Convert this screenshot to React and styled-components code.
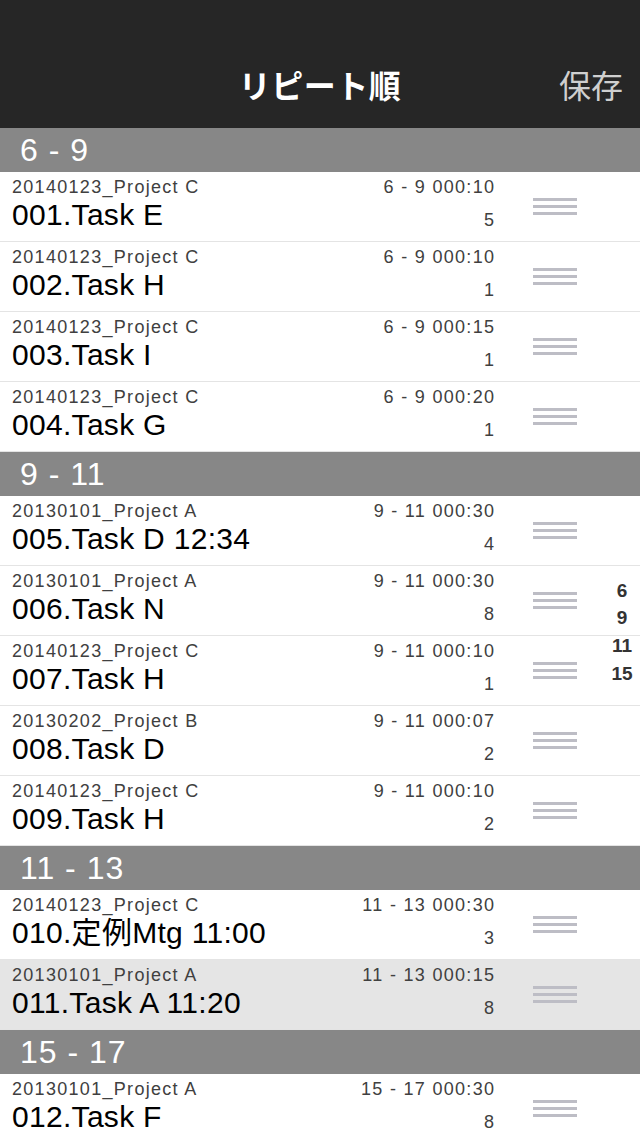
import React from "react";
import styled, { createGlobalStyle } from "styled-components";

const GlobalStyle = createGlobalStyle`
  html, body {
    margin: 0;
    padding: 0;
    background: #ffffff;
  }
  * {
    box-sizing: border-box;
  }
`;

const Screen = styled.div`
  width: 640px;
  height: 1136px;
  overflow: hidden;
  display: flex;
  flex-direction: column;
  background: #ffffff;
  font-family: "Liberation Sans", "Noto Sans CJK JP", sans-serif;
`;

const NavBar = styled.header`
  height: 128px;
  flex-shrink: 0;
  padding-top: 40px;
  background: #262626;
  display: grid;
  grid-template-columns: 1fr auto 1fr;
  align-items: center;
`;

const Title = styled.h1`
  grid-column: 2;
  margin: 0;
  font-family: "Noto Sans CJK JP", sans-serif;
  font-size: 32px;
  font-weight: 700;
  color: #ffffff;
  letter-spacing: 0.5px;
`;

const SaveButton = styled.span`
  justify-self: end;
  padding-right: 17px;
  font-family: "Noto Sans CJK JP", sans-serif;
  font-size: 32px;
  font-weight: 400;
  color: #cfcfcf;
`;

const Body = styled.div`
  position: relative;
  flex: 1;
  overflow: hidden;
`;

const SectionHeader = styled.div`
  height: 44px;
  padding-left: 20px;
  background: #878787;
  color: #ffffff;
  font-size: 32px;
  line-height: 44px;
  font-weight: 300;
  letter-spacing: 1px;
`;

const Row = styled.div`
  height: 70px;
  display: flex;
  align-items: stretch;
  padding-left: 12px;
  border-bottom: 1px solid #e4e4e4;
  background: ${({ $selected }) => ($selected ? "#e5e5e5" : "#ffffff")};
`;

const Main = styled.div`
  flex: 1;
  display: flex;
  flex-direction: column;
  padding-top: 4px;
  min-width: 0;
`;

const Project = styled.div`
  font-size: 18px;
  line-height: 23px;
  letter-spacing: 1.3px;
  color: #404040;
  white-space: nowrap;
`;

const TaskName = styled.div`
  font-size: 30px;
  line-height: 32px;
  letter-spacing: 0.3px;
  color: #000000;
  white-space: nowrap;
`;

const Meta = styled.div`
  display: flex;
  flex-direction: column;
  align-items: flex-end;
  padding-top: 4px;
`;

const MetaText = styled.div`
  margin-top: ${({ $gap }) => ($gap ? "10px" : "0")};
  margin-right: -1.3px;
  font-size: 18px;
  line-height: 23px;
  letter-spacing: 1.3px;
  color: #404040;
  white-space: nowrap;
`;

const Handle = styled.div`
  width: 44px;
  margin: 0 63px 0 39px;
  align-self: center;
  display: flex;
  flex-direction: column;
  gap: 4px;
`;

const HandleLine = styled.span`
  display: block;
  height: 3px;
  background: #bdbdc5;
`;

const IndexBar = styled.div`
  position: absolute;
  top: 0;
  bottom: 0;
  right: 3px;
  width: 30px;
  display: flex;
  flex-direction: column;
  justify-content: center;
  align-items: center;
`;

const IndexItem = styled.span`
  font-size: 19px;
  line-height: 27.7px;
  font-weight: 700;
  color: #333333;
`;

const sections = [
  {
    title: "6 - 9",
    rows: [
      ["20140123_Project C", "001.Task E", "6 - 9 000:10", "5"],
      ["20140123_Project C", "002.Task H", "6 - 9 000:10", "1"],
      ["20140123_Project C", "003.Task I", "6 - 9 000:15", "1"],
      ["20140123_Project C", "004.Task G", "6 - 9 000:20", "1"],
    ],
  },
  {
    title: "9 - 11",
    rows: [
      ["20130101_Project A", "005.Task D 12:34", "9 - 11 000:30", "4"],
      ["20130101_Project A", "006.Task N", "9 - 11 000:30", "8"],
      ["20140123_Project C", "007.Task H", "9 - 11 000:10", "1"],
      ["20130202_Project B", "008.Task D", "9 - 11 000:07", "2"],
      ["20140123_Project C", "009.Task H", "9 - 11 000:10", "2"],
    ],
  },
  {
    title: "11 - 13",
    rows: [
      ["20140123_Project C", "010.定例Mtg 11:00", "11 - 13 000:30", "3"],
      ["20130101_Project A", "011.Task A 11:20", "11 - 13 000:15", "8", true],
    ],
  },
  {
    title: "15 - 17",
    rows: [["20130101_Project A", "012.Task F", "15 - 17 000:30", "8"]],
  },
];

const indexLabels = ["6", "9", "11", "15"];

const TaskRow = ({ project, name, time, count, selected }) => (
  <Row $selected={selected}>
    <Main>
      <Project>{project}</Project>
      <TaskName>{name}</TaskName>
    </Main>
    <Meta>
      <MetaText>{time}</MetaText>
      <MetaText $gap>{count}</MetaText>
    </Meta>
    <Handle>
      <HandleLine />
      <HandleLine />
      <HandleLine />
    </Handle>
  </Row>
);

const App = () => {
  return (
    <>
      <GlobalStyle />
      <Screen>
        <NavBar>
          <Title>リピート順</Title>
          <SaveButton>保存</SaveButton>
        </NavBar>
        <Body>
          {sections.map((section) => (
            <section key={section.title}>
              <SectionHeader>{section.title}</SectionHeader>
              {section.rows.map(([project, name, time, count, selected]) => (
                <TaskRow
                  key={name}
                  project={project}
                  name={name}
                  time={time}
                  count={count}
                  selected={selected}
                />
              ))}
            </section>
          ))}
          <IndexBar>
            {indexLabels.map((label) => (
              <IndexItem key={label}>{label}</IndexItem>
            ))}
          </IndexBar>
        </Body>
      </Screen>
    </>
  );
};

export default App;
